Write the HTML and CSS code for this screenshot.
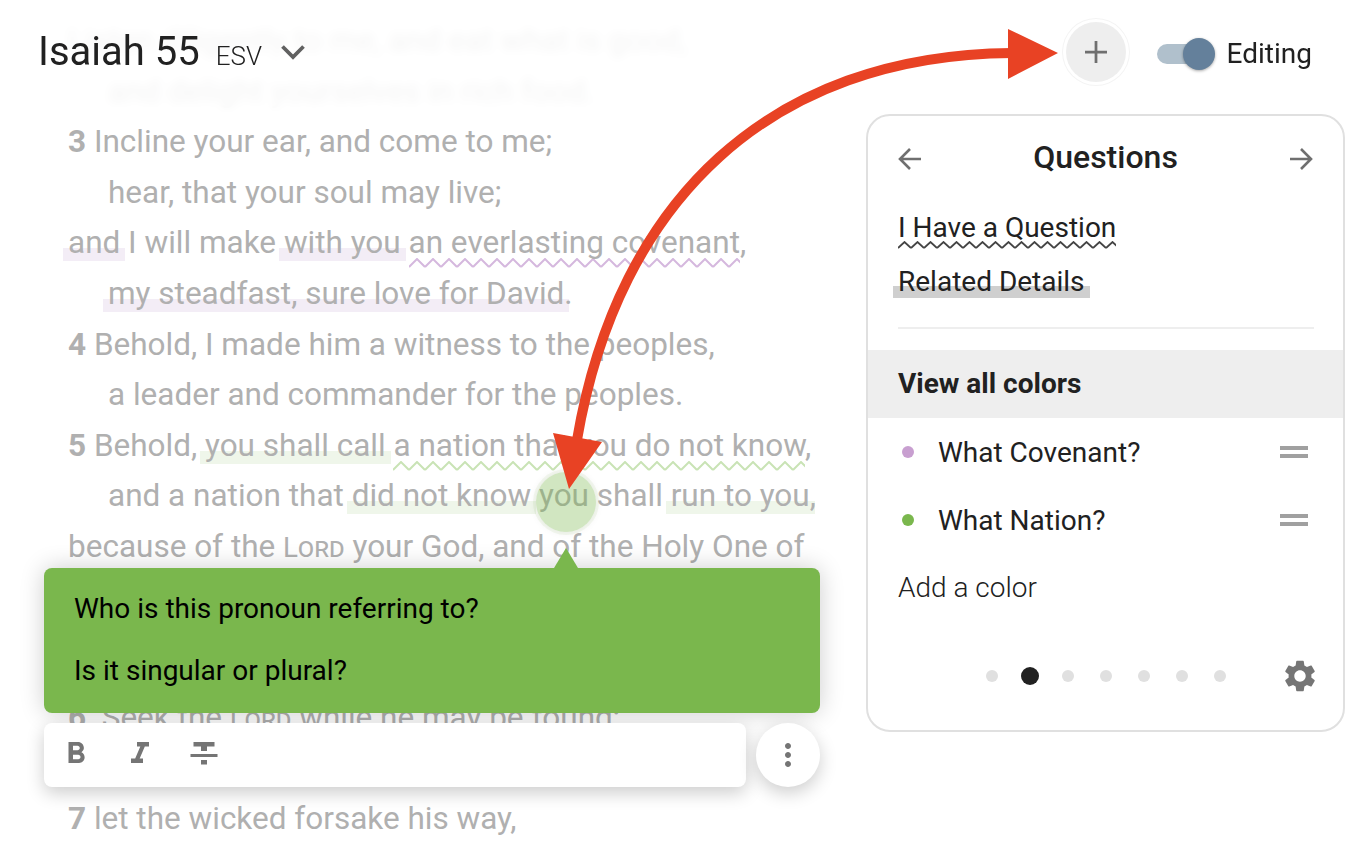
FILE: index.html
```html
<!DOCTYPE html>
<html lang="en">
<head>
    <meta charset="UTF-8">
    <meta name="viewport" content="width=device-width, initial-scale=1.0">
    <title>Isaiah 55</title>
    <link rel="stylesheet" href="styles.css">
</head>
<body>

    <div class="page">
        <main class="reading">
            <p class="line">Listen diligently to me, and eat what is good,</p>
            <p class="line indent">and delight yourselves in rich food.</p>
            <p class="line"><b>3</b> Incline your ear, and come to me;</p>
            <p class="line indent">hear, that your soul may live;</p>
            <p class="line"><span class="mark purple">and</span> I will make <span class="mark purple">with you</span> <span class="wavy purple">an everlasting covenant</span>,</p>
            <p class="line indent"><span class="mark purple">my steadfast, sure love for David</span>.</p>
            <p class="line"><b>4</b> Behold, I made him a witness to the peoples,</p>
            <p class="line indent">a leader and commander for the peoples.</p>
            <p class="line"><b>5</b> Behold, <span class="mark green">you shall call</span> <span class="wavy green">a nation that you do not know</span>,</p>
            <p class="line indent">and a nation that <span class="mark green">did not know</span> <span class="focus">you</span> shall <span class="mark green">run to you</span>,</p>
            <p class="line">because of the <span class="lord">Lord</span> your God, and of the Holy One of</p>
            <p class="line indent covered">Israel, for he has glorified you.</p>
            <p class="line stanza"><b>6</b> &nbsp;Seek the <span class="lord">Lord</span> while he may be found;</p>
            <p class="line indent covered">call upon him while he is near;</p>
            <p class="line"><b>7</b> let the wicked forsake his way,</p>
        </main>

        <aside class="panel">
            <div class="panel-head">
                <svg class="arrow-icon" viewBox="0 0 26 26"><path d="M24 13H3M13 3 3 13l10 10"/></svg>
                <h2>Questions</h2>
                <svg class="arrow-icon" viewBox="0 0 26 26"><path d="M2 13h21M13 3l10 10-10 10"/></svg>
            </div>
            <div class="styles">
                <div class="style-row"><span class="wavy dark">I Have a Question</span></div>
                <div class="style-row"><span class="mark grey">Related Details</span></div>
            </div>
            <div class="view-all">View all colors</div>
            <div class="color-row">
                <span class="dot dot-purple"></span>
                <span class="color-name">What Covenant?</span>
                <span class="handle"></span>
            </div>
            <div class="color-row">
                <span class="dot dot-green"></span>
                <span class="color-name">What Nation?</span>
                <span class="handle"></span>
            </div>
            <div class="add-color">Add a color</div>
            <div class="panel-foot">
                <div class="pager">
                    <span></span>
                    <span class="current"></span>
                    <span></span>
                    <span></span>
                    <span></span>
                    <span></span>
                    <span></span>
                </div>
                <svg class="gear" viewBox="0 0 24 24"><path d="M19.14 12.94c.04-.3.06-.61.06-.94 0-.32-.02-.64-.07-.94l2.03-1.58c.18-.14.23-.41.12-.61l-1.92-3.32c-.12-.22-.37-.29-.59-.22l-2.39.96c-.5-.38-1.03-.7-1.62-.94l-.36-2.54c-.04-.24-.24-.41-.48-.41h-3.84c-.24 0-.43.17-.47.41l-.36 2.54c-.59.24-1.13.57-1.62.94l-2.39-.96c-.22-.08-.47 0-.59.22L2.74 8.87c-.12.21-.08.47.12.61l2.03 1.58c-.05.3-.09.63-.09.94s.02.64.07.94l-2.03 1.58c-.18.14-.23.41-.12.61l1.92 3.32c.12.22.37.29.59.22l2.39-.96c.5.38 1.03.7 1.62.94l.36 2.54c.05.24.24.41.48.41h3.84c.24 0 .44-.17.47-.41l.36-2.54c.59-.24 1.13-.56 1.62-.94l2.39.96c.22.08.47 0 .59-.22l1.92-3.32c.12-.22.07-.47-.12-.61l-2.01-1.58zM12 15.6c-1.98 0-3.6-1.62-3.6-3.6s1.62-3.6 3.6-3.6 3.6 1.62 3.6 3.6-1.62 3.6-3.6 3.6z"/></svg>
            </div>
        </aside>

        <header class="topbar">
            <div class="passage">
                <h1>Isaiah 55</h1>
                <span class="version">ESV</span>
                <svg class="chevron" viewBox="0 0 24 16"><path d="M1.500 2.500 12 13 22.500 2.500"/></svg>
            </div>
            <div class="tools">
                <button class="add-btn">
                    <svg viewBox="0 0 24 24"><path d="M12 0v24M0 12h24"/></svg>
                </button>
                <span class="toggle"><span class="knob"></span></span>
                <span class="toggle-label">Editing</span>
            </div>
        </header>

        <div class="popover">
            <p>Who is this pronoun referring to?</p>
            <p>Is it singular or plural?</p>
        </div>

        <div class="editbar">
            <div class="toolbar">
                <button><svg viewBox="0 0 24 24"><path d="M15.6 10.79c.97-.67 1.65-1.77 1.65-2.79 0-2.26-1.75-4-4-4H7v14h7.04c2.09 0 3.71-1.7 3.71-3.79 0-1.52-.86-2.82-2.15-3.42zM10 6.5h3c.83 0 1.5.67 1.5 1.5s-.67 1.5-1.5 1.5h-3v-3zm3.5 9H10v-3h3.5c.83 0 1.5.67 1.5 1.5s-.67 1.5-1.5 1.5z"/></svg></button>
                <button><svg viewBox="0 0 24 24"><path d="M10 4v3h2.21l-3.42 8H6v3h8v-3h-2.21l3.42-8H18V4z"/></svg></button>
                <button><svg viewBox="0 0 24 24"><path d="M10 19h4v-3h-4v3zM5 4v3h5v3h4V7h5V4H5zM3 14h18v-2H3v2z"/></svg></button>
            </div>
            <button class="more-btn"><svg viewBox="0 0 24 24"><path d="M12 8c1.1 0 2-.9 2-2s-.9-2-2-2-2 .9-2 2 .9 2 2 2zm0 2c-1.1 0-2 .9-2 2s.9 2 2 2 2-.9 2-2-.9-2-2-2zm0 6c-1.1 0-2 .9-2 2s.9 2 2 2 2-.9 2-2-.9-2-2-2z"/></svg></button>
        </div>

        <svg class="callouts" viewBox="0 0 1364 850">
            <path class="callout-line" d="M1012 53C770 55 618 200 577 440"/>
            <path class="callout-head" d="M1008 29l50 24-50 26zM553 433l49 9-33 47z"/>
        </svg>
    </div>

</body>
</html>
```

FILE: styles.css
```css
body {
    margin: 0;
    background-color: #fff;
    font-family: Roboto, "Liberation Sans", sans-serif;
    color: #212121;
}

button {
    border: none;
    padding: 0;
    background: none;
}

.page {
    position: relative;
    display: flex;
    justify-content: space-between;
    width: 1364px;
    height: 850px;
    overflow: hidden;
}

/* passage text */
.reading {
    padding: 16px 0 0 68px;
    font-size: 31.5px;
    color: #b0b0b0;
}

.line {
    margin: 0;
    height: 50.6px;
    line-height: 50.6px;
    white-space: nowrap;
}

.indent {
    padding-left: 40px;
}

.stanza {
    margin-top: 70px;
}

.covered {
    visibility: hidden;
}

.lord {
    font-variant: small-caps;
    font-size: 0.88em;
}

.mark {
    padding: 0 5px;
    margin: 0 -5px;
    background-repeat: no-repeat;
}

.mark.purple {
    background-image: linear-gradient(transparent 65%, #f3edf6 65%);
}

.mark.green {
    background-image: linear-gradient(transparent 65%, #eff6ea 65%);
}

.mark.grey {
    background-image: linear-gradient(transparent 65%, #cfcfcf 65%);
}

.wavy {
    padding-bottom: 7px;
    background-repeat: repeat-x;
    background-position: left bottom;
}

.wavy.purple {
    background-image: url("data:image/svg+xml,%3Csvg xmlns='http://www.w3.org/2000/svg' width='16' height='10'%3E%3Cpath d='M0 9l8-8 8 8' fill='none' stroke='%23d5b8de' stroke-width='2'/%3E%3C/svg%3E");
}

.wavy.green {
    background-image: url("data:image/svg+xml,%3Csvg xmlns='http://www.w3.org/2000/svg' width='16' height='10'%3E%3Cpath d='M0 9l8-8 8 8' fill='none' stroke='%23c9e3b5' stroke-width='2'/%3E%3C/svg%3E");
}

.wavy.dark {
    padding-bottom: 5px;
    background-image: url("data:image/svg+xml,%3Csvg xmlns='http://www.w3.org/2000/svg' width='13' height='8'%3E%3Cpath d='M0 7l6.500-6 6.500 6' fill='none' stroke='%23444' stroke-width='1.800'/%3E%3C/svg%3E");
}

.focus {
    position: relative;
}

.focus::before {
    content: "";
    position: absolute;
    left: 50%;
    top: 50%;
    width: 60px;
    height: 60px;
    margin: -24px 0 0 -28px;
    border-radius: 50%;
    background-color: rgba(122, 183, 77, 0.35);
    box-shadow: 0 0 0 3px rgba(122, 183, 77, 0.08), 0 0 8px rgba(0, 0, 0, 0.08);
}

/* top bar */
.topbar {
    position: absolute;
    top: 0;
    left: 0;
    right: 0;
    height: 112px;
    box-sizing: border-box;
    padding: 22px 52px 0 38px;
    display: flex;
    justify-content: space-between;
    align-items: flex-start;
    background-color: rgba(255, 255, 255, 0.86);
    backdrop-filter: blur(5px);
}

.passage {
    display: flex;
    align-items: baseline;
    padding-top: 1px;
}

.passage h1 {
    margin: 0;
    font-size: 40px;
    font-weight: 400;
    line-height: 58px;
}

.version {
    margin-left: 16px;
    font-size: 26px;
    font-weight: 300;
}

.chevron {
    align-self: flex-start;
    width: 24px;
    height: 16px;
    margin: 21px 0 0 19px;
    fill: none;
    stroke: #616161;
    stroke-width: 3.8;
}

.tools {
    display: flex;
    align-items: center;
    height: 60px;
}

.add-btn {
    display: flex;
    align-items: center;
    justify-content: center;
    width: 60px;
    height: 60px;
    border-radius: 50%;
    background-color: #eee;
    box-shadow: 0 0 0 3px #fff, 0 0 0 4px #f4f4f4;
}

.add-btn svg {
    width: 22px;
    height: 22px;
    fill: none;
    stroke: #6f6f6f;
    stroke-width: 3;
}

.toggle {
    position: relative;
    width: 46px;
    height: 20px;
    margin: 4px 0 0 31px;
    border-radius: 10px;
    background-color: #b0c0cc;
}

.knob {
    position: absolute;
    right: -12px;
    top: -6px;
    width: 32px;
    height: 32px;
    border-radius: 50%;
    background-color: #64809b;
    box-shadow: 0 1px 3px rgba(0, 0, 0, 0.35);
}

.toggle-label {
    margin: 3px 0 0 24px;
    font-size: 28px;
}

/* questions panel */
.panel {
    margin: 114px 19px 0 0;
    width: 479px;
    height: 618px;
    box-sizing: border-box;
    border: 2px solid #e0e0e0;
    border-radius: 24px;
    font-size: 28px;
}

.panel-head {
    display: flex;
    justify-content: space-between;
    align-items: center;
    padding: 23px 29px 0;
}

.panel-head h2 {
    margin: 0;
    font-size: 32px;
    font-weight: 500;
    line-height: 36px;
}

.arrow-icon {
    width: 26px;
    height: 26px;
    margin-top: 3px;
    fill: none;
    stroke: #6f6f6f;
    stroke-width: 2.6;
}

.styles {
    margin: 26px 29px 0 30px;
    padding-bottom: 18px;
    border-bottom: 2px solid #eee;
}

.style-row {
    height: 54px;
    line-height: 54px;
}

.view-all {
    margin-top: 21px;
    height: 68px;
    line-height: 68px;
    padding-left: 30px;
    background-color: #eee;
    font-weight: 700;
}

.color-row {
    display: flex;
    align-items: center;
    height: 68px;
    padding: 0 35px 0 34px;
}

.dot {
    width: 12px;
    height: 12px;
    border-radius: 50%;
}

.dot-purple {
    background-color: #c89fd0;
}

.dot-green {
    background-color: #7ab74d;
}

.color-name {
    flex: 1;
    margin-left: 24px;
}

.handle {
    width: 28px;
    height: 4px;
    border-top: 4px solid #a0a0a0;
    border-bottom: 4px solid #a0a0a0;
}

.add-color {
    height: 68px;
    line-height: 68px;
    padding-left: 30px;
    font-weight: 300;
}

.panel-foot {
    display: flex;
    justify-content: space-between;
    align-items: center;
    margin-top: 35px;
    padding: 0 24px 0 118px;
}

.pager {
    display: flex;
    align-items: center;
    gap: 26px;
}

.pager span {
    width: 12px;
    height: 12px;
    border-radius: 50%;
    background-color: #e0e0e0;
}

.pager .current {
    width: 18px;
    height: 18px;
    margin: 0 -3px;
    background-color: #212121;
}

.gear {
    width: 38px;
    height: 38px;
    fill: #757575;
}

/* green note and edit toolbar */
.popover {
    position: absolute;
    left: 44px;
    top: 568px;
    width: 776px;
    height: 145px;
    box-sizing: border-box;
    padding: 10px 30px;
    border-radius: 8px;
    background-color: #7ab74d;
    box-shadow: 0 0 24px rgba(0, 0, 0, 0.2);
    color: #000;
    font-size: 28px;
}

.popover::before {
    content: "";
    position: absolute;
    left: 510px;
    top: -20px;
    border-left: 12px solid transparent;
    border-right: 12px solid transparent;
    border-bottom: 20px solid #7ab74d;
}

.popover p {
    margin: 0;
    height: 62px;
    line-height: 62px;
}

.editbar {
    position: absolute;
    left: 44px;
    top: 723px;
    width: 776px;
    display: flex;
    justify-content: space-between;
}

.toolbar {
    width: 702px;
    height: 64px;
    display: flex;
    border-radius: 8px;
    background-color: #fff;
    box-shadow: 0 6px 18px rgba(0, 0, 0, 0.2);
}

.toolbar button {
    display: flex;
    align-items: center;
    justify-content: center;
    width: 64px;
    height: 62px;
}

.toolbar svg {
    width: 36px;
    height: 36px;
    fill: #757575;
}

.more-btn {
    display: flex;
    align-items: center;
    justify-content: center;
    width: 64px;
    height: 64px;
    border-radius: 50%;
    background-color: #fff;
    box-shadow: 0 6px 18px rgba(0, 0, 0, 0.2);
}

.more-btn svg {
    width: 36px;
    height: 36px;
    fill: #757575;
}

/* red annotation arrows */
.callouts {
    position: absolute;
    left: 0;
    top: 0;
    width: 1364px;
    height: 850px;
    pointer-events: none;
}

.callout-line {
    fill: none;
    stroke: #e84224;
    stroke-width: 10;
}

.callout-head {
    fill: #e84224;
}
```
